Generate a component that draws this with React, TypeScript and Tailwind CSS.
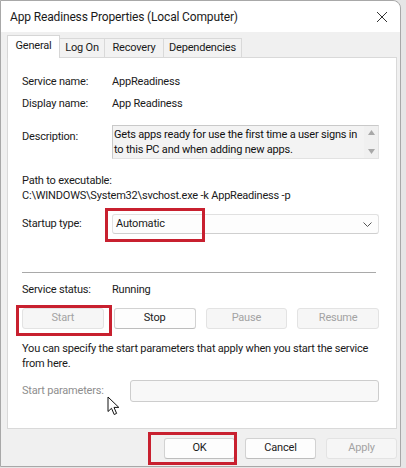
import React from "react";

const Btn = ({
  label,
  disabled,
  className = "",
}: {
  label: string;
  disabled?: boolean;
  className?: string;
}) => (
  <div
    className={
      "h-[21px] flex items-center justify-center rounded-[3px] border " +
      (disabled
        ? "bg-[#f6f6f6] border-[#e3e3e3] text-[#a3a3a3] "
        : "bg-[#fdfdfd] border-[#d2d2d2] border-b-[#bdbdbd] text-[#1b1b1b] ") +
      className
    }
  >
    {label}
  </div>
);

const RedBox = ({ className }: { className: string }) => (
  <div className={"absolute border-[3px] border-[#c8202f] pointer-events-none " + className} />
);

export default function App() {
  return (
    <div className="w-[406px] h-[468px] bg-[#e6e6e6] overflow-hidden font-['Roboto',sans-serif] text-[11px] tracking-[-0.2px] text-[#1a1a1a]">
      <div className="relative w-[401px] h-[467px] bg-[#f0f0f0] border border-[#a8a8a8] rounded-tr-[8px] flex flex-col">
        {/* Title bar */}
        <div className="h-[31px] bg-white rounded-tr-[8px] flex items-center pl-[9px] pr-[12px] justify-between">
          <span className="text-[12px] tracking-[-0.15px] text-[#1a1a1a]">App Readiness Properties (Local Computer)</span>
          <svg width="12" height="12" viewBox="0 0 12 12" className="mt-[1px]">
            <path d="M1 1 L11 11 M11 1 L1 11" stroke="#333" strokeWidth="1" />
          </svg>
        </div>

        {/* Tabs */}
        <div className="flex items-end pl-[6px] pt-[3px] relative z-10">
          <div className="h-[23px] w-[53px] bg-white border border-[#d6d6d6] border-b-0 flex items-center justify-center -mb-[1px] pb-[2px]">
            General
          </div>
          <div className="h-[19px] w-[45px] bg-[#f2f2f2] border border-[#d9d9d9] border-l-0 border-b-0 flex items-center justify-center">
            Log On
          </div>
          <div className="h-[19px] w-[59px] bg-[#f2f2f2] border border-[#d9d9d9] border-l-0 border-b-0 flex items-center justify-center">
            Recovery
          </div>
          <div className="h-[19px] w-[78px] bg-[#f2f2f2] border border-[#d9d9d9] border-l-0 border-b-0 flex items-center justify-center">
            Dependencies
          </div>
        </div>

        {/* Panel */}
        <div className="ml-[6px] w-[390px] h-[372px] bg-white border border-[#d9d9d9] pl-[14px] pr-[17px] flex flex-col relative">
          <div className="mt-[16px] h-[16px] flex items-center">
            <span className="w-[90px]">Service name:</span>
            <span>AppReadiness</span>
          </div>
          <div className="mt-[6px] h-[16px] flex items-center">
            <span className="w-[90px]">Display name:</span>
            <span>App Readiness</span>
          </div>
          <div className="mt-[13px] flex">
            <span className="w-[90px] pt-[4px] leading-[16px]">Description:</span>
            <div className="flex-1 h-[34px] bg-[#f3f3f3] border border-[#c9c9c9] border-r-[#e2e2e2] border-b-[#e2e2e2] flex">
              <div className="flex-1 pl-[1px] pt-[1px] leading-[15px] text-[#111]">
                Gets apps ready for use the first time a user signs in to this PC and when adding new apps.
              </div>
              <div className="w-[14px] flex flex-col items-center justify-between py-[4px] bg-[#f0f0f0]">
                <svg width="7" height="5" viewBox="0 0 7 5">
                  <path d="M0 5 L3.5 0 L7 5 Z" fill="#a8a8a8" />
                </svg>
                <svg width="7" height="5" viewBox="0 0 7 5">
                  <path d="M0 0 L3.5 5 L7 0 Z" fill="#a8a8a8" />
                </svg>
              </div>
            </div>
          </div>
          <div className="mt-[14px] h-[16px] flex items-center">Path to executable:</div>
          <div className="h-[15px] flex items-center">C:\WINDOWS\System32\svchost.exe -k AppReadiness -p</div>
          <div className="mt-[10px] flex items-center">
            <span className="w-[90px]">Startup type:</span>
            <div className="relative flex-1 h-[20px] bg-[#fdfdfd] border border-[#e1e1e1] border-b-[#cfcfcf] rounded-[3px] flex items-center justify-between pl-[3px] pr-[6px]">
              <span>Automatic</span>
              <svg width="9" height="5" viewBox="0 0 9 5">
                <path d="M0.5 0.5 L4.5 4.5 L8.5 0.5" stroke="#555" strokeWidth="1" fill="none" />
              </svg>
              <RedBox className="-left-[8px] -top-[7px] w-[100px] h-[34px]" />
            </div>
          </div>
          <div className="mt-[38px] h-px bg-[#a9a9a9] mr-[3px]" />
          <div className="mt-[9px] h-[16px] flex items-center">
            <span className="w-[90px]">Service status:</span>
            <span>Running</span>
          </div>
          <div className="mt-[10px] grid grid-cols-4 gap-[10px]">
            <div className="relative">
              <Btn label="Start" disabled />
              <RedBox className="-left-[6px] -top-[3px] w-[96px] h-[31px]" />
            </div>
            <Btn label="Stop" />
            <Btn label="Pause" disabled />
            <Btn label="Resume" disabled />
          </div>
          <div className="mt-[12px] leading-[15px] pr-[4px]">
            You can specify the start parameters that apply when you start the service from here.
          </div>
          <div className="mt-[9px] flex items-center">
            <span className="w-[108px] text-[#8e8e8e]">Start parameters:</span>
            <div className="flex-1 h-[22px] bg-[#f8f8f8] border border-[#cdcdcd] rounded-[3px]" />
          </div>
          <svg
            className="absolute left-[99px] top-[338px]"
            width="13"
            height="20"
            viewBox="0 0 13 20"
          >
            <path
              d="M1 1 L1 15.5 L4.5 12.3 L7.2 18.5 L9.6 17.4 L7 11.4 L11.8 11.4 Z"
              fill="#fff"
              stroke="#111"
              strokeWidth="1"
              strokeLinejoin="round"
            />
          </svg>
        </div>

        {/* Footer */}
        <div className="mt-[9px] flex justify-end gap-[10px] pr-[3px]">
          <div className="relative">
            <Btn label="OK" className="w-[71px]" />
            <RedBox className="-left-[16px] -top-[6px] w-[89px] h-[33px]" />
          </div>
          <Btn label="Cancel" className="w-[71px]" />
          <Btn label="Apply" disabled className="w-[71px]" />
        </div>
      </div>
    </div>
  );
}
